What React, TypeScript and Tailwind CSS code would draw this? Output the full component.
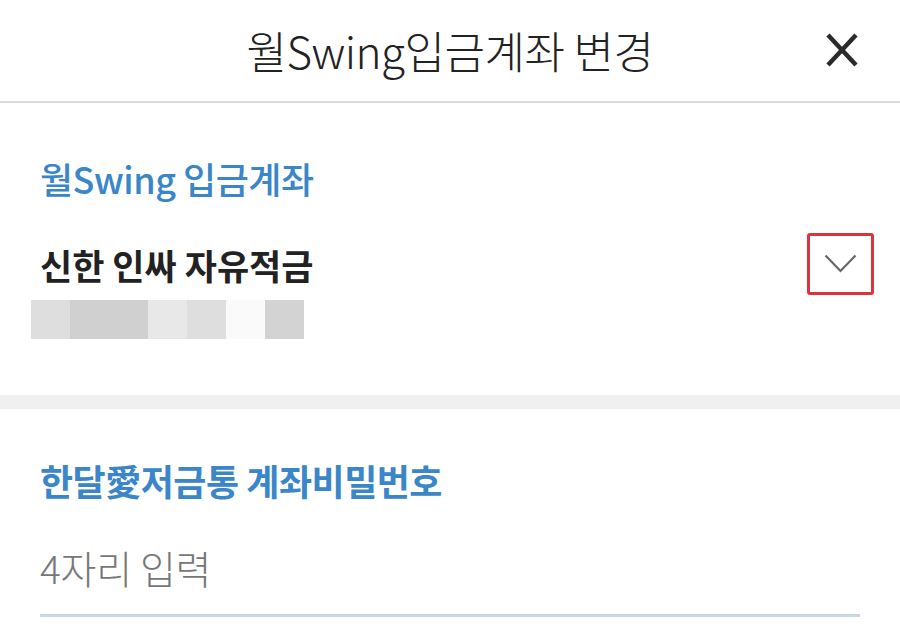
import React from 'react';

const FONT = "font-['Noto_Sans_CJK_KR','Noto_Sans',sans-serif]";

const maskBlocks = ['#dedede', '#d0d0d0', '#d0d0d0', '#e8e8e8', '#dedede', '#fafafa', '#d3d3d3'];

function Header() {
    return (
        <div className="relative flex h-[103px] items-center justify-center border-b-2 border-[#dcdcdc]">
            <div className="text-[44px] font-light tracking-[-0.5px] text-[#222] leading-none pb-[2px]">월Swing입금계좌 변경</div>
            <button className="absolute right-[40px] top-[32px] flex h-[36px] w-[36px] items-center justify-center">
                <svg width="34" height="36" viewBox="0 0 34 36">
                    <path d="M3 3 L31 33 M31 3 L3 33" stroke="#2a2a2a" strokeWidth="4.5" strokeLinecap="butt" />
                </svg>
            </button>
        </div>
    );
}

function AccountSection() {
    return (
        <div className="h-[292px] px-[40px] pt-[57px]">
            <div className="text-[36px] font-medium tracking-[-0.5px] leading-none text-[#3a86c8]">월Swing 입금계좌</div>
            <div className="mt-[51px] flex items-start justify-between">
                <div>
                    <div className="text-[35px] font-bold leading-none text-[#222]">신한 인싸 자유적금</div>
                    <div className="ml-[-9px] mt-[18px] flex">
                        {maskBlocks.map((c, i) => (
                            <div key={i} className="h-[39px] w-[39px]" style={{ backgroundColor: c }} />
                        ))}
                    </div>
                </div>
                <div className="mr-[-14px] mt-[-14px] flex h-[62px] w-[67px] items-center justify-center rounded-[3px] border-[3px] border-[#e0323c]">
                    <svg width="33" height="20" viewBox="0 0 33 20">
                        <path d="M1.5 1.5 L16.5 17 L31.5 1.5" fill="none" stroke="#666" strokeWidth="2.2" />
                    </svg>
                </div>
            </div>
        </div>
    );
}

function PasswordSection() {
    return (
        <div className="px-[40px] pt-[53px]">
            <div className="text-[36px] font-bold tracking-[-0.5px] leading-none text-[#3a86c8]">한달愛저금통 계좌비밀번호</div>
            <input
                className="mt-[41px] w-full border-b-[3px] border-[#c8d8e2] pb-[19px] text-[39px] font-light tracking-[-0.3px] leading-none text-[#333] placeholder:text-[#777] outline-none"
                placeholder="4자리 입력"
                readOnly
            />
        </div>
    );
}

export default function App() {
    return (
        <div className={`h-[642px] w-[900px] overflow-hidden bg-white ${FONT}`}>
            <Header />
            <AccountSection />
            <div className="h-[14px] bg-[#f0f0f0]" />
            <PasswordSection />
        </div>
    );
}
